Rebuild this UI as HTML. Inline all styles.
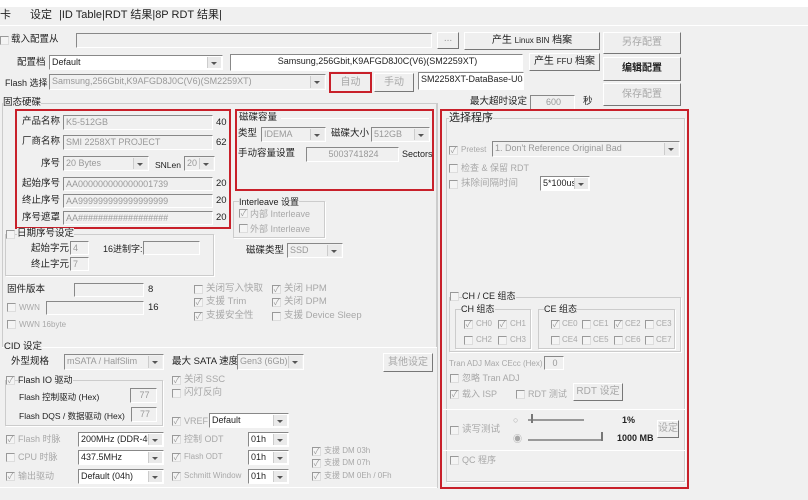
<!DOCTYPE html>
<html><head><meta charset="utf-8"><style>
*{box-sizing:border-box;margin:0;padding:0}
body{width:808px;height:500px;background:#f0f0f0;position:relative;overflow:hidden;font-family:"Liberation Sans","Noto Sans CJK SC",sans-serif;font-size:9.5px;color:#222}
div,span{position:absolute}
.t{white-space:nowrap;line-height:12px}
.g{color:#a8a8a8}
.in{background:#f0f0f0;border-top:1px solid #888;border-left:1px solid #888;border-right:1px solid #fff;border-bottom:1px solid #fff;color:#999;font-size:9px;line-height:13px;padding-left:2px;white-space:nowrap;overflow:hidden}
.w{background:#fff;color:#222}
.sel:after{content:"";position:absolute;right:1px;top:1px;bottom:1px;width:13px;background:#eaeaea;border-left:1px solid #ccc}
.sel:before{content:"";position:absolute;right:5px;top:6px;border:3px solid transparent;border-top:3px solid #555;z-index:2}
.btn{background:#efefef;border:1px solid;border-color:#fff #777 #777 #fff;text-align:center;font-size:10px;white-space:nowrap}
.cb{width:9px;height:9px;border:1px solid #999;border-right-color:#ddd;border-bottom-color:#ddd;background:#f4f4f4;font-size:8px;line-height:7px;color:#999;text-align:center}
.red{border:2px solid #c8202a}
.gb{border:1px solid #ccc;box-shadow:1px 1px 0 #fff}
.ln{height:1px;background:#c8c8c8;border-bottom:1px solid #fff}
</style></head><body>
<div style="left:0;top:0;width:808px;height:7px;background:#fff"></div>
<div class="t" style="left:0;top:9px;font-size:11px">卡</div>
<div class="t" style="left:30px;top:9px;font-size:11px">设定</div>
<div class="t" style="left:59px;top:9px;font-size:11px">|ID Table|RDT 结果|8P RDT 结果|</div>
<div class="ln" style="left:0;top:25px;width:808px;background:#ddd"></div>

<div class="cb" style="left:0;top:36px"></div>
<div class="t" style="left:11px;top:34px">载入配置从</div>
<div class="in" style="left:76px;top:33px;width:356px;height:15px"></div>
<div class="btn" style="left:437px;top:32px;width:22px;height:17px;color:#999">...</div>
<div class="btn" style="left:464px;top:32px;width:136px;height:18px;line-height:16px">产生 <span style="position:static;font-size:8px">Linux BIN</span> 档案</div>
<div class="btn g" style="left:603px;top:32px;width:78px;height:22px;line-height:20px">另存配置</div>

<div class="t" style="left:17px;top:57px">配置档</div>
<div class="in w sel" style="left:49px;top:55px;width:174px;height:15px">Default</div>
<div class="in w" style="left:230px;top:54px;width:293px;height:17px;text-align:center;color:#222">Samsung,256Gbit,K9AFGD8J0C(V6)(SM2259XT)</div>
<div class="btn" style="left:529px;top:53px;width:71px;height:18px;line-height:16px">产生 <span style="position:static;font-size:8px">FFU</span> 档案</div>
<div class="btn" style="left:603px;top:57px;width:78px;height:24px;line-height:22px;font-weight:bold">编辑配置</div>

<div class="t" style="left:5px;top:77px;font-size:9px">Flash 选择</div>
<div class="in sel" style="left:49px;top:74px;width:277px;height:16px">Samsung,256Gbit,K9AFGD8J0C(V6)(SM2259XT)</div>
<div class="btn g red" style="left:329px;top:72px;width:43px;height:21px;line-height:17px">自动</div>
<div class="btn g" style="left:374px;top:73px;width:40px;height:19px;line-height:17px">手动</div>
<div class="in w" style="left:418px;top:72px;width:106px;height:18px;color:#222">SM2258XT-DataBase-U0406</div>
<div class="btn g" style="left:603px;top:83px;width:78px;height:23px;line-height:21px">保存配置</div>

<div class="gb" style="left:2px;top:103px;width:435px;height:244px;border-bottom:none"></div>
<div class="t" style="left:3px;top:97px;background:#f0f0f0">固态硬碟</div>
<div class="t" style="left:470px;top:96px">最大超时设定</div>
<div class="in" style="left:530px;top:95px;width:45px;height:15px;text-align:center">600</div>
<div class="t" style="left:583px;top:96px">秒</div>

<div class="red" style="left:15px;top:109px;width:216px;height:120px"></div>
<div class="t" style="left:22px;top:116px">产品名称</div><div class="in" style="left:63px;top:115px;width:150px;height:15px">K5-512GB</div><div class="t" style="left:216px;top:117px">40</div>
<div class="t" style="left:22px;top:136px">厂商名称</div><div class="in" style="left:63px;top:135px;width:150px;height:15px">SMI 2258XT PROJECT</div><div class="t" style="left:216px;top:137px">62</div>
<div class="t" style="left:41px;top:158px">序号</div><div class="in sel" style="left:63px;top:156px;width:86px;height:15px">20 Bytes</div>
<div class="t" style="left:155px;top:159px;font-size:8.5px">SNLen</div><div class="in sel" style="left:184px;top:156px;width:31px;height:15px">20</div>
<div class="t" style="left:22px;top:178px">起始序号</div><div class="in" style="left:63px;top:177px;width:150px;height:14px">AA000000000000001739</div><div class="t" style="left:216px;top:178px">20</div>
<div class="t" style="left:22px;top:195px">终止序号</div><div class="in" style="left:63px;top:194px;width:150px;height:14px">AA999999999999999999</div><div class="t" style="left:216px;top:195px">20</div>
<div class="t" style="left:22px;top:212px">序号遮罩</div><div class="in" style="left:63px;top:211px;width:150px;height:14px">AA##################</div><div class="t" style="left:216px;top:212px">20</div>

<div class="red" style="left:235px;top:109px;width:199px;height:82px"></div>
<div class="t" style="left:239px;top:112px">磁碟容量</div>
<div class="ln" style="left:281px;top:118px;width:148px"></div>
<div class="t" style="left:238px;top:128px">类型</div><div class="in sel" style="left:261px;top:127px;width:65px;height:15px">IDEMA</div>
<div class="t" style="left:331px;top:128px">磁碟大小</div><div class="in sel" style="left:371px;top:127px;width:59px;height:15px">512GB</div>
<div class="t" style="left:238px;top:148px">手动容量设置</div><div class="in" style="left:306px;top:147px;width:93px;height:15px;text-align:center">5003741824</div>
<div class="t" style="left:402px;top:148px;font-size:9px">Sectors</div>

<div class="gb" style="left:233px;top:201px;width:92px;height:37px"></div>
<div class="t" style="left:239px;top:196px;font-size:9px;background:#f0f0f0">Interleave 设置</div>
<div class="cb" style="left:239px;top:209px">✓</div><div class="t g" style="left:250px;top:208px;font-size:9px">内部 Interleave</div>
<div class="cb" style="left:239px;top:224px"></div><div class="t g" style="left:250px;top:223px;font-size:9px">外部 Interleave</div>

<div class="gb" style="left:5px;top:234px;width:209px;height:42px"></div>
<div class="cb" style="left:6px;top:230px"></div><div class="t" style="left:17px;top:228px;background:#f0f0f0">日期序号设定</div>
<div class="t" style="left:31px;top:243px">起始字元</div><div class="in" style="left:70px;top:241px;width:19px;height:14px">4</div>
<div class="t" style="left:103px;top:243px;font-size:9px">16进制字:</div><div class="in" style="left:143px;top:241px;width:57px;height:14px"></div>
<div class="t" style="left:31px;top:259px">终止字元</div><div class="in" style="left:70px;top:257px;width:19px;height:14px">7</div>
<div class="t" style="left:246px;top:245px">磁碟类型</div><div class="in sel" style="left:287px;top:243px;width:56px;height:15px">SSD</div>

<div class="t" style="left:7px;top:284px">固件版本</div><div class="in" style="left:74px;top:283px;width:70px;height:14px"></div><div class="t" style="left:148px;top:284px">8</div>
<div class="cb" style="left:7px;top:303px"></div><div class="t g" style="left:19px;top:302px;font-size:8px">WWN</div><div class="in" style="left:46px;top:301px;width:98px;height:14px"></div><div class="t" style="left:148px;top:302px">16</div>
<div class="cb" style="left:7px;top:320px"></div><div class="t g" style="left:19px;top:319px;font-size:8px">WWN 16byte</div>

<div class="cb" style="left:194px;top:285px"></div><div class="t g" style="left:206px;top:283px">关闭写入快取</div>
<div class="cb" style="left:194px;top:298px">✓</div><div class="t g" style="left:206px;top:296px">支援 Trim</div>
<div class="cb" style="left:194px;top:312px">✓</div><div class="t g" style="left:206px;top:310px">支援安全性</div>
<div class="cb" style="left:272px;top:285px">✓</div><div class="t g" style="left:284px;top:283px">关闭 HPM</div>
<div class="cb" style="left:272px;top:298px">✓</div><div class="t g" style="left:284px;top:296px">关闭 DPM</div>
<div class="cb" style="left:272px;top:312px"></div><div class="t g" style="left:284px;top:310px">支援 Device Sleep</div>

<div class="ln" style="left:2px;top:347px;width:435px"></div>
<div class="t" style="left:4px;top:341px;background:#f0f0f0">CID 设定</div>
<div class="t" style="left:11px;top:356px">外型规格</div><div class="in sel" style="left:64px;top:354px;width:100px;height:16px">mSATA / HalfSlim</div>
<div class="t" style="left:172px;top:356px">最大 SATA 速度</div><div class="in sel" style="left:237px;top:354px;width:67px;height:16px">Gen3 (6Gb)</div>
<div class="btn g" style="left:383px;top:353px;width:50px;height:19px;line-height:17px">其他设定</div>

<div class="gb" style="left:5px;top:380px;width:158px;height:46px"></div>
<div class="cb" style="left:6px;top:376px">✓</div><div class="t" style="left:18px;top:374px;font-size:9px;background:#f0f0f0">Flash IO 驱动</div>
<div class="t" style="left:19px;top:391px;font-size:8.5px">Flash 控制驱动 (Hex)</div><div class="in" style="left:130px;top:388px;width:27px;height:15px;text-align:center">77</div>
<div class="t" style="left:19px;top:410px;font-size:8.5px">Flash DQS / 数据驱动 (Hex)</div><div class="in" style="left:131px;top:407px;width:26px;height:15px;text-align:center">77</div>

<div class="cb" style="left:172px;top:376px">✓</div><div class="t g" style="left:184px;top:374px">关闭 SSC</div>
<div class="cb" style="left:172px;top:389px"></div><div class="t g" style="left:184px;top:387px">闪灯反向</div>
<div class="cb" style="left:172px;top:417px">✓</div><div class="t g" style="left:184px;top:415px;font-size:9px">VREF</div><div class="in w sel" style="left:209px;top:413px;width:80px;height:15px">Default</div>

<div class="cb" style="left:6px;top:435px">✓</div><div class="t g" style="left:18px;top:433px;font-size:9px">Flash 时脉</div><div class="in w sel" style="left:78px;top:432px;width:86px;height:15px">200MHz (DDR-400)</div>
<div class="cb" style="left:6px;top:453px"></div><div class="t g" style="left:18px;top:451px;font-size:9px">CPU 时脉</div><div class="in w sel" style="left:78px;top:450px;width:86px;height:15px">437.5MHz</div>
<div class="cb" style="left:6px;top:472px">✓</div><div class="t g" style="left:18px;top:470px;font-size:9px">输出驱动</div><div class="in w sel" style="left:78px;top:469px;width:86px;height:15px">Default (04h)</div>
<div class="cb" style="left:172px;top:435px">✓</div><div class="t g" style="left:184px;top:433px;font-size:9px">控制 ODT</div><div class="in w sel" style="left:248px;top:432px;width:41px;height:15px">01h</div>
<div class="cb" style="left:172px;top:453px">✓</div><div class="t g" style="left:184px;top:451px;font-size:8px">Flash ODT</div><div class="in w sel" style="left:248px;top:450px;width:41px;height:15px">01h</div>
<div class="cb" style="left:172px;top:472px">✓</div><div class="t g" style="left:184px;top:470px;font-size:8px">Schmitt Window</div><div class="in w sel" style="left:248px;top:469px;width:41px;height:15px">01h</div>
<div class="cb" style="left:312px;top:447px">✓</div><div class="t g" style="left:324px;top:445px;font-size:8px">支援 DM 03h</div>
<div class="cb" style="left:312px;top:459px">✓</div><div class="t g" style="left:324px;top:457px;font-size:8px">支援 DM 07h</div>
<div class="cb" style="left:312px;top:472px">✓</div><div class="t g" style="left:324px;top:470px;font-size:8px">支援 DM 0Eh / 0Fh</div>
<div class="ln" style="left:0;top:487px;width:437px"></div>
<div style="left:437px;top:103px;width:1px;height:385px;background:#ccc"></div>

<div class="red" style="left:440px;top:109px;width:249px;height:380px"></div>
<div class="gb" style="left:446px;top:118px;width:239px;height:364px"></div>
<div class="t" style="left:449px;top:112px;font-size:11px;background:#f0f0f0">选择程序</div>
<div class="cb" style="left:449px;top:146px">✓</div><div class="t g" style="left:461px;top:144px;font-size:8px">Pretest</div>
<div class="in sel" style="left:492px;top:141px;width:188px;height:16px">1. Don't Reference Original Bad</div>
<div class="cb" style="left:449px;top:164px"></div><div class="t g" style="left:461px;top:162px;font-size:9px">检查 &amp; 保留 RDT</div>
<div class="cb" style="left:449px;top:180px"></div><div class="t g" style="left:461px;top:178px">抹除间隔时间</div>
<div class="in w sel" style="left:540px;top:176px;width:50px;height:15px">5*100us</div>

<div class="gb" style="left:449px;top:297px;width:232px;height:55px"></div>
<div class="cb" style="left:450px;top:292px"></div><div class="t" style="left:462px;top:290px;font-size:9px;background:#f0f0f0">CH / CE 组态</div>
<div class="gb" style="left:455px;top:309px;width:76px;height:40px"></div>
<div class="t" style="left:461px;top:303px;font-size:9px;background:#f0f0f0">CH 组态</div>
<div class="gb" style="left:538px;top:309px;width:137px;height:40px"></div>
<div class="t" style="left:544px;top:303px;font-size:9px;background:#f0f0f0">CE 组态</div>
<div class="cb" style="left:464px;top:320px">✓</div><div class="t g" style="left:476px;top:318px;font-size:8px">CH0</div>
<div class="cb" style="left:498px;top:320px">✓</div><div class="t g" style="left:510px;top:318px;font-size:8px">CH1</div>
<div class="cb" style="left:464px;top:336px"></div><div class="t g" style="left:476px;top:334px;font-size:8px">CH2</div>
<div class="cb" style="left:498px;top:336px"></div><div class="t g" style="left:510px;top:334px;font-size:8px">CH3</div>
<div class="cb" style="left:551px;top:320px">✓</div><div class="t g" style="left:562px;top:318px;font-size:8px">CE0</div>
<div class="cb" style="left:582px;top:320px"></div><div class="t g" style="left:593px;top:318px;font-size:8px">CE1</div>
<div class="cb" style="left:614px;top:320px">✓</div><div class="t g" style="left:625px;top:318px;font-size:8px">CE2</div>
<div class="cb" style="left:645px;top:320px"></div><div class="t g" style="left:656px;top:318px;font-size:8px">CE3</div>
<div class="cb" style="left:551px;top:336px"></div><div class="t g" style="left:562px;top:334px;font-size:8px">CE4</div>
<div class="cb" style="left:582px;top:336px"></div><div class="t g" style="left:593px;top:334px;font-size:8px">CE5</div>
<div class="cb" style="left:614px;top:336px"></div><div class="t g" style="left:625px;top:334px;font-size:8px">CE6</div>
<div class="cb" style="left:645px;top:336px"></div><div class="t g" style="left:656px;top:334px;font-size:8px">CE7</div>

<div class="t g" style="left:449px;top:358px;font-size:8px">Tran ADJ Max CEcc (Hex)</div>
<div class="in" style="left:544px;top:356px;width:20px;height:14px;text-align:center">0</div>
<div class="cb" style="left:450px;top:374px"></div><div class="t g" style="left:462px;top:372px;font-size:9px">忽略 Tran ADJ</div>
<div class="cb" style="left:450px;top:390px">✓</div><div class="t g" style="left:462px;top:388px;font-size:9px">载入 ISP</div>
<div class="cb" style="left:516px;top:390px"></div><div class="t g" style="left:528px;top:388px;font-size:9px">RDT 测试</div>
<div class="btn g" style="left:573px;top:383px;width:50px;height:18px;line-height:16px">RDT 设定</div>
<div class="ln" style="left:443px;top:409px;width:243px"></div>
<div class="cb" style="left:450px;top:426px"></div><div class="t g" style="left:462px;top:424px">读写测试</div>
<div class="t g" style="left:513px;top:414px;font-size:9px">○</div>
<div class="t g" style="left:513px;top:433px;font-size:9px">◉</div>
<div style="left:528px;top:419px;width:56px;height:2px;background:#999"></div>
<div style="left:531px;top:414px;width:2px;height:9px;background:#777"></div>
<div style="left:528px;top:439px;width:75px;height:2px;background:#999"></div>
<div style="left:601px;top:432px;width:2px;height:9px;background:#777"></div>
<div class="t" style="left:622px;top:414px;font-size:9px;font-weight:bold">1%</div>
<div class="t" style="left:617px;top:432px;font-size:9px;font-weight:bold">1000 MB</div>
<div class="btn g" style="left:657px;top:420px;width:22px;height:18px;line-height:16px">设定</div>
<div class="ln" style="left:443px;top:450px;width:243px"></div>
<div class="cb" style="left:450px;top:456px"></div><div class="t g" style="left:462px;top:454px;font-size:9px">QC 程序</div>
</body></html>
